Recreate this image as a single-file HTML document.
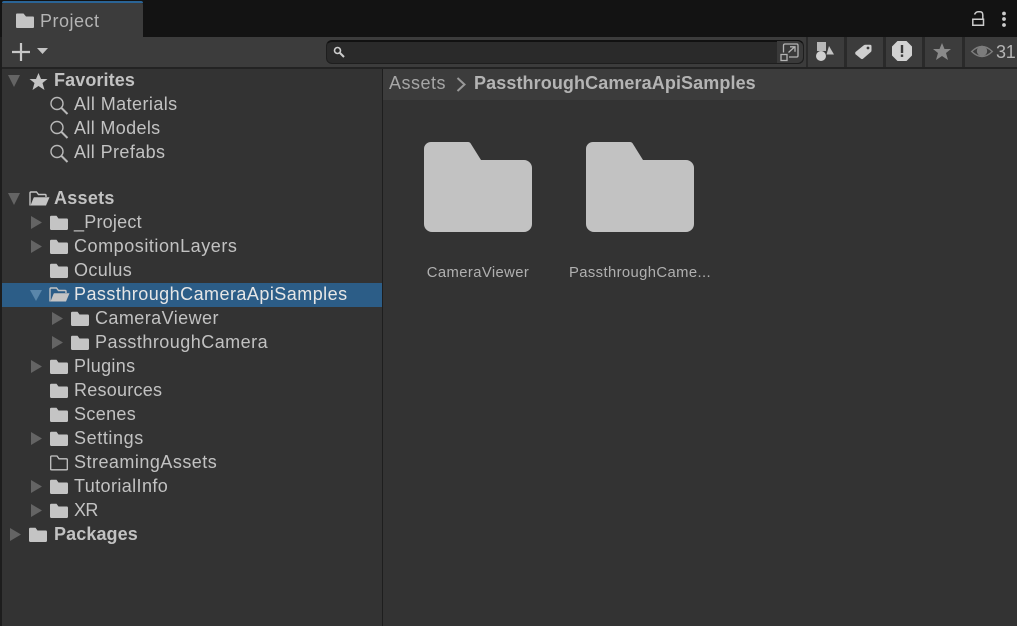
<!DOCTYPE html>
<html><head><meta charset="utf-8">
<style>
html,body{margin:0;padding:0;background:#333;}
#r{position:relative;width:1017px;height:626px;overflow:hidden;background:#333;font-family:"Liberation Sans",sans-serif;color:#c4c4c4;}
.a{position:absolute;}
.t{position:absolute;font-size:18px;line-height:24px;height:24px;white-space:nowrap;letter-spacing:.35px;color:#c2c2c2;}
.b{font-weight:700;letter-spacing:.1px;}
svg{position:absolute;overflow:visible;}
</style></head><body>
<div id="r">
<div class="a" style="left:0;top:0;width:1017px;height:37px;background:#131313"></div>
<div class="a" style="left:2px;top:1px;width:141px;height:36px;background:#3c3c3c;border-radius:4px 4px 0 0"></div>
<div class="a" style="left:2px;top:1px;width:141px;height:2px;background:#2a6496;border-radius:4px 4px 0 0"></div>
<svg style="left:16px;top:13px" width="18" height="16"><path d="M0 1.500Q0 .5 1 .5H7.500L10 3.500H17Q18 3.500 18 4.500V14Q18 15 17 15H1Q0 15 0 14V1.500Z" fill="#c4c4c4"/></svg>
<div class="t" style="left:40px;top:9px;color:#b4b4b4;letter-spacing:.5px">Project</div>
<svg style="left:972px;top:11px" width="13" height="15"><path d="M2.500 3.500Q4 .8 6 .8H8Q10.800 .8 10.800 4V8" fill="none" stroke="#ccc" stroke-width="1.500"/><path d="M.8 8.200H11.500V14.200H.8Z" fill="none" stroke="#ccc" stroke-width="1.500"/></svg>
<svg style="left:1001px;top:11px" width="6" height="16"><circle cx="3" cy="2.500" r="1.900" fill="#ccc"/><circle cx="3" cy="8" r="1.900" fill="#ccc"/><circle cx="3" cy="14" r="1.900" fill="#ccc"/></svg>

<div class="a" style="left:0;top:37px;width:1017px;height:30px;background:#3c3c3c"></div>
<div class="a" style="left:0;top:67px;width:1017px;height:2px;background:#232323"></div>
<div class="a" style="left:0;top:37px;width:2px;height:589px;background:#1d1d1d"></div>
<svg style="left:12px;top:43px" width="36" height="18"><path d="M9 0V18M0 9H18" stroke="#c8c8c8" stroke-width="2.200"/><path d="M25 5H36L30.500 11Z" fill="#c4c4c4"/></svg>

<div class="a" style="left:326px;top:40px;width:478px;height:24px;background:#2a2a2a;border:1px solid #1e1e1e;border-top:2px solid #111;box-sizing:border-box;border-radius:6px"></div>
<div class="a" style="left:777px;top:41px;width:26px;height:22px;background:#3a3a3a;border-radius:0 6px 6px 0;"></div>
<svg style="left:333px;top:46px" width="12" height="12"><circle cx="4.500" cy="4.500" r="3" fill="none" stroke="#ccc" stroke-width="1.600"/><path d="M7 7L11 11" stroke="#ccc" stroke-width="2"/></svg>
<svg style="left:780px;top:42px" width="20" height="20"><path d="M3.500 10.500V3.500Q3.500 2 5 2H16.800Q18 2 18 3.500V13.500Q18 15 16.800 15H9" fill="none" stroke="#b4b4b4" stroke-width="1.300"/><rect x="1" y="12.500" width="6" height="6" fill="none" stroke="#b4b4b4" stroke-width="1.300"/><path d="M8.500 10.500L14.500 5M10 4.800H15V9.800" fill="none" stroke="#b4b4b4" stroke-width="1.300"/></svg>

<div class="a" style="left:806px;top:37px;width:2px;height:30px;background:#2a2a2a"></div>
<div class="a" style="left:844px;top:37px;width:3px;height:30px;background:#2a2a2a"></div>
<div class="a" style="left:883px;top:37px;width:3px;height:30px;background:#2a2a2a"></div>
<div class="a" style="left:922px;top:37px;width:3px;height:30px;background:#2a2a2a"></div>
<div class="a" style="left:962px;top:37px;width:3px;height:30px;background:#2a2a2a"></div>

<svg style="left:815px;top:41px" width="20" height="21"><rect x="2" y="1" width="9" height="9" fill="#b8b8b8"/><path d="M14 5L19 13.500H11.500Z" fill="#c4c4c4"/><circle cx="6" cy="15" r="5" fill="#d0d0d0"/></svg>
<svg style="left:855px;top:44px" width="17" height="16"><path d="M.5 8L8.500 1.500Q9.500 .8 10.500 .8H15Q16.500 .8 16.500 2.300V6.200Q16.500 7.300 15.800 8L8 14.800Q7 15.500 6 14.800L.5 10.200Q-.3 9 .5 8Z" fill="#cfcfcf"/><circle cx="13" cy="4" r="1.400" fill="#3c3c3c"/></svg>
<svg style="left:892px;top:41px" width="20" height="20"><path d="M5.500 0H14.500L20 5.500V14.500L14.500 20H5.500L0 14.500V5.500Z" fill="#d2d2d2"/><rect x="8.800" y="4" width="2.400" height="8" fill="#3a3a3a"/><rect x="8.800" y="13.500" width="2.400" height="2.400" fill="#3a3a3a"/></svg>
<svg style="left:933px;top:43px" width="18" height="18"><path d="M9 0L11.500 6H18L13 10L15 17L9 13L3 17L5 10L0 6H6.500Z" fill="#8a8a8a"/></svg>
<svg style="left:971px;top:44px" width="22" height="15"><path d="M0.700 7.500Q11 -2.500 21.300 7.500Q11 17.500 .7 7.500Z" fill="none" stroke="#7c7c7c" stroke-width="1.400"/><circle cx="11" cy="7" r="5.200" fill="#7c7c7c"/></svg>
<div class="t" style="left:996px;top:40px;color:#b4b4b4;letter-spacing:-.3px">31</div>

<!-- right panel -->
<div class="a" style="left:382px;top:69px;width:1px;height:557px;background:#1e1e1e"></div>
<div class="a" style="left:383px;top:69px;width:634px;height:31px;background:#3c3c3c"></div>
<div class="t" style="left:389px;top:71px;color:#a6a6a6;letter-spacing:.5px">Assets</div>
<svg style="left:456px;top:77px" width="11" height="15"><path d="M1.500 1L8.500 7.500L1.500 14" fill="none" stroke="#999" stroke-width="2"/></svg>
<div class="t b" style="left:474px;top:71px;color:#b4b4b4">PassthroughCameraApiSamples</div>

<svg style="left:424px;top:142px" width="108" height="90"><path d="M7 0H44Q46 0 47 2L57 18H100A8 8 0 0 1 108 26V82A8 8 0 0 1 100 90H8A8 8 0 0 1 0 82V7A7 7 0 0 1 7 0Z" fill="#c2c2c2"/></svg>
<svg style="left:586px;top:142px" width="108" height="90"><path d="M7 0H44Q46 0 47 2L57 18H100A8 8 0 0 1 108 26V82A8 8 0 0 1 100 90H8A8 8 0 0 1 0 82V7A7 7 0 0 1 7 0Z" fill="#c2c2c2"/></svg>
<div class="a" style="left:400px;top:264px;width:156px;text-align:center;font-size:14.8px;line-height:18px;letter-spacing:.4px;color:#b0b0b0;white-space:nowrap">CameraViewer</div>
<div class="a" style="left:562px;top:264px;width:156px;text-align:center;font-size:14.8px;line-height:18px;letter-spacing:.4px;color:#b0b0b0;white-space:nowrap">PassthroughCame...</div>

<!-- tree selection -->
<div class="a" style="left:2px;top:283px;width:380px;height:24px;background:#2c5d87"></div>

<svg style="left:0;top:0" width="382" height="626">
<defs>
<path id="f" d="M0 2Q0 .8 1.200 .8H6.500L8.500 3.500H16.800Q18 3.500 18 4.700V13.800Q18 15 16.800 15H1.200Q0 15 0 13.800Z" fill="#c4c4c4"/>
<path id="d" d="M0 0H12L6 12Z" fill="#646464"/>
<path id="r2" d="M0 0L11 6.500L0 13Z" fill="#646464"/>
<g id="o"><path d="M0 14.500V2Q0 1 1 1H6.500L8.500 3.500H15Q16 3.500 16 4.500V6" fill="none" stroke="#c4c4c4" stroke-width="1.400"/><path d="M.5 14.500L3.500 7Q3.800 6.300 4.500 6.300H19.500L16 14.500Z" fill="#c4c4c4"/></g>
<g id="m" fill="none" stroke="#b8b8b8"><circle cx="7.500" cy="7.500" r="6" stroke-width="1.400"/><path d="M12 12L18 18" stroke-width="2"/></g>
</defs>
<use href="#d" x="8" y="75"/>
<path d="M38.500 73L41 79H47.500L42.500 83L44.500 90L38.500 86L32.500 90L34.500 83L29.500 79H36Z" fill="#c4c4c4"/>
<use href="#m" x="49.500" y="96"/><use href="#m" x="49.500" y="120"/><use href="#m" x="49.500" y="144"/>
<use href="#d" x="8" y="193"/>
<use href="#o" x="30" y="191"/>
<use href="#r2" x="31" y="216"/><use href="#f" x="50" y="215"/>
<use href="#r2" x="31" y="240"/><use href="#f" x="50" y="239"/>
<use href="#f" x="50" y="263"/>
<path d="M30 290H42L36 301Z" fill="#5a86aa"/>
<use href="#o" x="50" y="287"/>
<use href="#r2" x="52" y="312"/><use href="#f" x="71" y="311"/>
<use href="#r2" x="52" y="336"/><use href="#f" x="71" y="335"/>
<use href="#r2" x="31" y="360"/><use href="#f" x="50" y="359"/>
<use href="#f" x="50" y="383"/>
<use href="#f" x="50" y="407"/>
<use href="#r2" x="31" y="432"/><use href="#f" x="50" y="431"/>
<path d="M50.700 469.500V457Q50.700 456 51.700 456H57L59 458.800H66.300Q67.300 458.800 67.300 459.800V469.500Q67.300 469.800 66.300 469.800H51.700Q50.700 469.800 50.700 469.500Z" fill="none" stroke="#c4c4c4" stroke-width="1.300"/>
<use href="#r2" x="31" y="480"/><use href="#f" x="50" y="479"/>
<use href="#r2" x="31" y="504"/><use href="#f" x="50" y="503"/>
<use href="#r2" x="10" y="528"/><use href="#f" x="29" y="527"/>
</svg>

<div class="t b" style="left:54px;top:68px">Favorites</div>
<div class="t" style="left:74px;top:92px;letter-spacing:.43px">All Materials</div>
<div class="t" style="left:74px;top:116px;letter-spacing:.35px">All Models</div>
<div class="t" style="left:74px;top:140px;letter-spacing:.4px">All Prefabs</div>
<div class="t b" style="left:54px;top:186px;letter-spacing:.27px">Assets</div>
<div class="t" style="left:74px;top:210px;letter-spacing:.22px">_Project</div>
<div class="t" style="left:74px;top:234px;letter-spacing:.55px">CompositionLayers</div>
<div class="t" style="left:74px;top:258px">Oculus</div>
<div class="t" style="left:74px;top:282px;color:#e6e6e6;letter-spacing:.46px">PassthroughCameraApiSamples</div>
<div class="t" style="left:95px;top:306px;letter-spacing:.43px">CameraViewer</div>
<div class="t" style="left:95px;top:330px;letter-spacing:.47px">PassthroughCamera</div>
<div class="t" style="left:74px;top:354px">Plugins</div>
<div class="t" style="left:74px;top:378px;letter-spacing:.24px">Resources</div>
<div class="t" style="left:74px;top:402px">Scenes</div>
<div class="t" style="left:74px;top:426px;letter-spacing:.6px">Settings</div>
<div class="t" style="left:74px;top:450px;letter-spacing:.48px">StreamingAssets</div>
<div class="t" style="left:74px;top:474px;letter-spacing:.4px">TutorialInfo</div>
<div class="t" style="left:74px;top:498px;letter-spacing:-.65px">XR</div>
<div class="t b" style="left:54px;top:522px">Packages</div>
</div>
</body></html>
